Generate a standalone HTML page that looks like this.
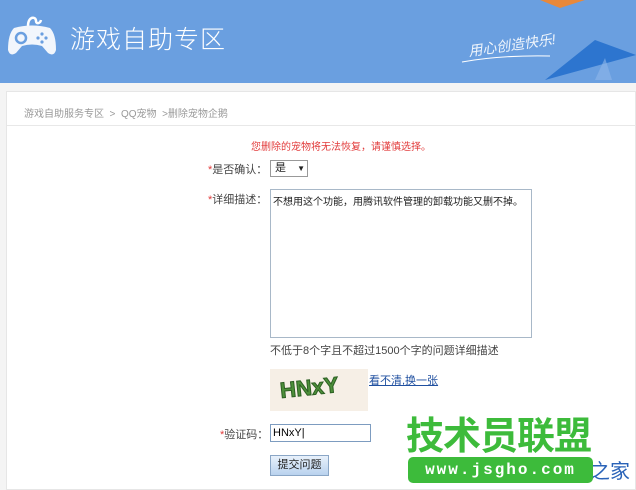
<!DOCTYPE html>
<html><head><meta charset="utf-8">
<style>
*{margin:0;padding:0;box-sizing:border-box}
body{width:636px;height:490px;overflow:hidden;background:#f4f4f4;font-family:"Liberation Sans","Noto Sans CJK SC",sans-serif;position:relative}
.hdr{position:absolute;left:0;top:0;width:636px;height:83px;background:#6a9fe0;overflow:hidden}
.title{position:absolute;left:70px;top:20px;color:#fff;font-size:25px;letter-spacing:1px;font-weight:300}
.slogan{position:absolute;left:468px;top:35px;color:#fff;font-size:14px;font-style:italic;transform:rotate(-8deg);opacity:.9}
.panel{position:absolute;left:6px;top:91px;width:630px;height:399px;background:#fff;border:1px solid #e6e6e6}
.bc{position:absolute;left:17px;top:13px;font-size:10px;color:#999}
.sep{position:absolute;left:0;top:33px;width:630px;border-top:1px solid #e8e8e8}
.warn{position:absolute;left:244px;top:46px;font-size:10px;color:#e23c3c}
.lbl{position:absolute;font-size:11px;color:#444}
.lbl b{color:#e23c3c;font-weight:normal}
.sel{position:absolute;left:263px;top:68px;width:38px;height:17px;border:1px solid #999;font-size:11px;padding-left:4px;line-height:15px;color:#222}
.ta{position:absolute;left:263px;top:97px;width:262px;height:149px;border:1px solid #a8b8c8;font-size:10px;padding:3px 2px;color:#222}
.hint{position:absolute;left:263px;top:250px;font-size:11px;color:#444}
.cap{position:absolute;left:263px;top:277px;width:98px;height:42px;background:#f6efe6;overflow:hidden}
.cap span{position:absolute;left:10px;top:6px;font:bold 22px "Liberation Sans",sans-serif;color:#4d8f3a;-webkit-text-stroke:1px #2b5e22;transform:rotate(-6deg)}
.lnk{position:absolute;left:362px;top:280px;font-size:11px;color:#2050a0;text-decoration:underline}
.inp{position:absolute;left:263px;top:332px;width:101px;height:18px;border:1px solid #7d9cc0;font-size:11px;padding-left:2px;line-height:16px}
.btn{position:absolute;left:263px;top:363px;width:59px;height:21px;border:1px solid #8aa6c6;background:linear-gradient(#e8f1fb,#b9d2ee);font-size:11px;text-align:center;line-height:19px;color:#222}
.wm1{position:absolute;left:406px;top:416px;font-size:38px;font-weight:bold;color:#3dbb3b;letter-spacing:-1px;line-height:42px}
.wm2{position:absolute;left:408px;top:457px;width:185px;height:26px;background:#3dbb3b;border-radius:5px;color:#fff;font:bold 16px "Liberation Mono",monospace;letter-spacing:2px;text-align:center;line-height:26px}
.wm3{position:absolute;left:590px;top:455px;font-size:20px;color:#2a63b8}
</style></head><body>
<div class="hdr">
 <svg style="position:absolute;left:6px;top:12px" width="52" height="46" viewBox="0 0 52 46">
  <path d="M22 14 C22 4 30 4 30 9 C30 12 34 12 35 8" fill="none" stroke="#fff" stroke-width="2.5"/>
  <path d="M8 16 Q26 11 44 16 Q50 22 50 38 Q48 45 42 41 L36 34 Q26 31 16 34 L10 41 Q4 45 2 38 Q2 22 8 16Z" fill="#f2f6fc"/>
  <circle cx="15" cy="26" r="5" fill="none" stroke="#6a9fe0" stroke-width="2.5"/>
  <circle cx="36" cy="22" r="1.6" fill="#6a9fe0"/><circle cx="36" cy="30" r="1.6" fill="#6a9fe0"/>
  <circle cx="32" cy="26" r="1.6" fill="#6a9fe0"/><circle cx="40" cy="26" r="1.6" fill="#6a9fe0"/>
 </svg>
 <div class="title">游戏自助专区</div>
 <div class="slogan">用心创造快乐!</div>
 <svg style="position:absolute;left:0;top:0" width="636" height="83">
  <polygon points="540,0 585,0 560,8" fill="#e8883a"/>
  <polygon points="545,80 595,40 636,55" fill="#2d75cf"/>
  <polygon points="595,80 605,58 612,80" fill="#8fb8ea" opacity=".6"/>
  <path d="M462 62 Q500 55 550 56" stroke="#fff" stroke-width="1" fill="none"/>
 </svg>
</div>
<div class="panel">
 <div class="bc">游戏自助服务专区 &nbsp;&gt;&nbsp; QQ宠物 &nbsp;&gt;删除宠物企鹅</div>
 <div class="sep"></div>
 <div class="warn">您删除的宠物将无法恢复，请谨慎选择。</div>
 <div class="lbl" style="left:201px;top:69px"><b>*</b>是否确认：</div>
 <div class="sel">是 <span style="font-size:8px;margin-left:8px">▼</span></div>
 <div class="lbl" style="left:201px;top:99px"><b>*</b>详细描述：</div>
 <div class="ta">不想用这个功能，用腾讯软件管理的卸载功能又删不掉。</div>
 <div class="hint">不低于8个字且不超过1500个字的问题详细描述</div>
 <div class="cap"><span>HNxY</span></div>
 <div class="lnk">看不清,换一张</div>
 <div class="lbl" style="left:213px;top:334px"><b>*</b>验证码：</div>
 <div class="inp">HNxY|</div>
 <div class="btn">提交问题</div>
</div>
<div class="wm1">技术员联盟</div>
<div class="wm3">之家</div>
<div class="wm2">www.jsgho.com</div>
</body></html>
